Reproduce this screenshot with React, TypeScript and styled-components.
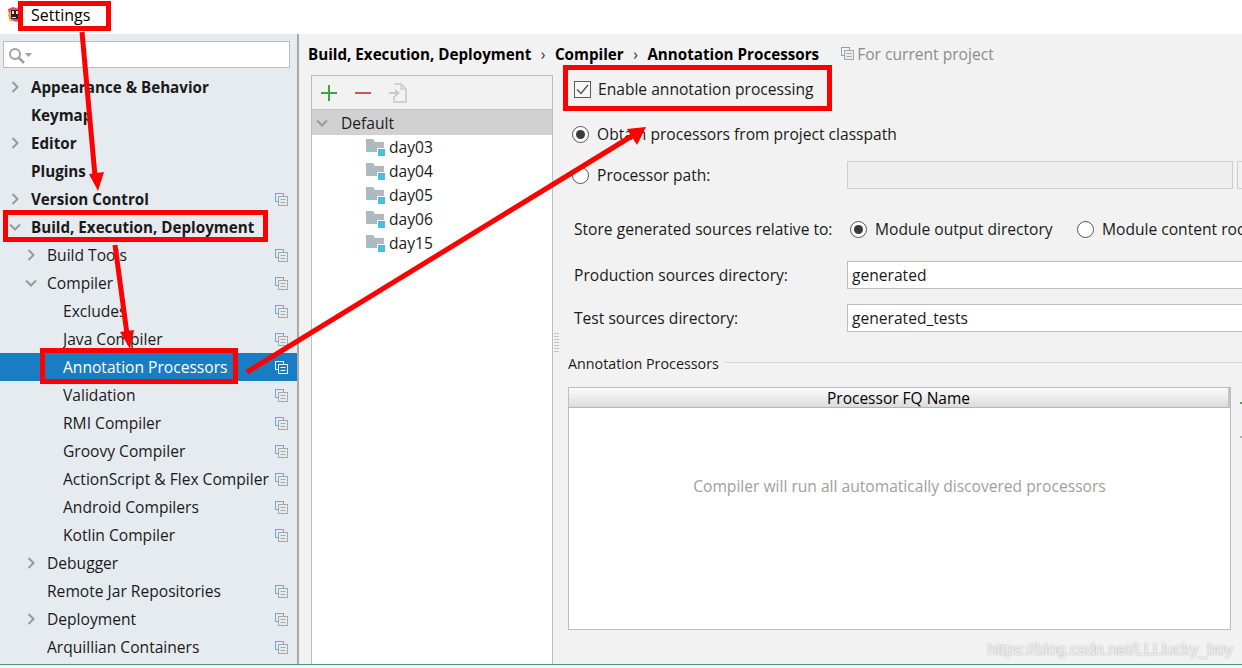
import React from "react"
import styled, { createGlobalStyle } from "styled-components"

const Global = createGlobalStyle`
    html, body {
        margin: 0;
        padding: 0;
        background: #ffffff;
        overflow: hidden;
    }
    * {
        box-sizing: border-box;
    }
`

type TreeItem = {
    label: string
    level: 0 | 1 | 2
    arrow?: "right" | "down"
    bold?: boolean
    copy?: boolean
    selected?: boolean
}

const treeItems: TreeItem[] = [
    { label: "Appearance & Behavior", level: 0, arrow: "right", bold: true },
    { label: "Keymap", level: 0, bold: true },
    { label: "Editor", level: 0, arrow: "right", bold: true },
    { label: "Plugins", level: 0, bold: true },
    { label: "Version Control", level: 0, arrow: "right", bold: true, copy: true },
    { label: "Build, Execution, Deployment", level: 0, arrow: "down", bold: true },
    { label: "Build Tools", level: 1, arrow: "right", copy: true },
    { label: "Compiler", level: 1, arrow: "down", copy: true },
    { label: "Excludes", level: 2, copy: true },
    { label: "Java Compiler", level: 2, copy: true },
    { label: "Annotation Processors", level: 2, copy: true, selected: true },
    { label: "Validation", level: 2, copy: true },
    { label: "RMI Compiler", level: 2, copy: true },
    { label: "Groovy Compiler", level: 2, copy: true },
    { label: "ActionScript & Flex Compiler", level: 2, copy: true },
    { label: "Android Compilers", level: 2, copy: true },
    { label: "Kotlin Compiler", level: 2, copy: true },
    { label: "Debugger", level: 1, arrow: "right" },
    { label: "Remote Jar Repositories", level: 1, copy: true },
    { label: "Deployment", level: 1, arrow: "right", copy: true },
    { label: "Arquillian Containers", level: 1, copy: true },
]

const modules = ["day03", "day04", "day05", "day06", "day15"]

const Chevron = ({ dir }: { dir: "right" | "down" }) => (
    <svg width="12" height="12" viewBox="0 0 12 12" fill="none">
        <path
            d={dir === "right" ? "M3.5 1 L8.5 6 L3.5 11" : "M1 3.5 L6 8.5 L11 3.5"}
            stroke="#9a9a9a"
            strokeWidth="2"
        />
    </svg>
)

const CopyIcon = ({ light }: { light?: boolean }) => (
    <svg width="13" height="13" viewBox="0 0 13 13" fill="none">
        <rect x="0.5" y="0.5" width="8" height="8" stroke={light ? "#ffffff" : "#6fa8d0"} />
        <rect x="3.5" y="3.5" width="9" height="9" fill={light ? "#1a7dc4" : "#e6ebf0"} stroke={light ? "#ffffff" : "#a8a8a8"} />
        <path d="M5.5 6.5 H10.5 M5.5 9.5 H10.5" stroke={light ? "#ffffff" : "#a8a8a8"} />
    </svg>
)

const FolderIcon = () => (
    <svg width="19" height="17" viewBox="0 0 19 17">
        <path d="M0 0 H7 L9 3 H18 V13 H0 Z" fill="#aeb9c0" />
        <rect x="11" y="9" width="8" height="8" fill="#ffffff" />
        <rect x="12" y="10" width="7" height="7" fill="#4fbbe8" />
    </svg>
)

const ProjectLogo = () => (
    <svg width="15" height="15" viewBox="0 0 15 15">
        <path d="M0 2 L5 0 L14 3 L15 10 L9 15 L2 13 Z" fill="#e8467c" />
        <path d="M9 0 L14 2 L15 8 L10 6 Z" fill="#f58a3c" />
        <path d="M0 8 L3 3 L5 13 L2 14 Z" fill="#f0a030" />
        <rect x="3" y="3" width="9" height="9" fill="#222222" />
        <rect x="4" y="4" width="2" height="3" fill="#dddddd" />
        <rect x="8" y="4" width="2" height="3" fill="#dddddd" />
        <rect x="4" y="10" width="4" height="1" fill="#dddddd" />
    </svg>
)

const ExportIcon = () => (
    <svg width="18" height="20" viewBox="0 0 18 20" fill="none">
        <path d="M5 1 H12 L17 6 V19 H5 V13" stroke="#d0d0d0" strokeWidth="2" />
        <path d="M12 1 V6 H17" stroke="#d0d0d0" strokeWidth="1.5" />
        <path d="M0 9 H6 V6 L11 10 L6 14 V11 H0 Z" fill="#c8c8c8" />
    </svg>
)

const Marks = () => (
    <S.Overlay width="1242" height="668" viewBox="0 0 1242 668" fill="none">
        <g stroke="#ff0000" strokeWidth="5">
            <rect x="20.5" y="3.5" width="88" height="25" />
            <rect x="5.5" y="212.5" width="260" height="27" />
            <rect x="42.5" y="350.5" width="193" height="31" />
            <rect x="565.5" y="67.5" width="264" height="41" />
        </g>
        <g stroke="#ff0000" strokeWidth="5">
            <path d="M82 32 L95 176" />
            <path d="M115 245 L127 334" />
            <path d="M247 372 L632 136" />
        </g>
        <g fill="#ff0000">
            <path d="M89 174 L104 172 L98 191 Z" />
            <path d="M120 332 L134 330 L130 349 Z" />
            <path d="M646 127 L627 129 L637 145 Z" />
        </g>
    </S.Overlay>
)

const App = () => {
    return (
        <S.Page>
            <Global />
            <S.TitleBar>
                <ProjectLogo />
                <S.Title>Settings</S.Title>
            </S.TitleBar>
            <S.Body>
                <S.Sidebar>
                    <S.SearchBox>
                        <svg width="23" height="16" viewBox="0 0 23 16" fill="none">
                            <circle cx="6" cy="6" r="5" stroke="#a0a0a0" strokeWidth="2" />
                            <path d="M9.5 9.5 L15 15" stroke="#a0a0a0" strokeWidth="2.5" />
                            <path d="M16 5 H23 L19.5 9 Z" fill="#a0a0a0" />
                        </svg>
                    </S.SearchBox>
                    <S.Tree>
                        {treeItems.map((item) => (
                            <S.TreeRow key={item.label} $selected={item.selected}>
                                <S.TreeIndent $level={item.level}>
                                    {item.arrow && <Chevron dir={item.arrow} />}
                                </S.TreeIndent>
                                <S.TreeLabel $bold={item.bold} $selected={item.selected}>
                                    {item.label}
                                </S.TreeLabel>
                                {item.copy && (
                                    <S.TreeCopy $selected={item.selected}>
                                        <CopyIcon light={item.selected} />
                                    </S.TreeCopy>
                                )}
                            </S.TreeRow>
                        ))}
                    </S.Tree>
                </S.Sidebar>
                <S.Main>
                    <S.Breadcrumb>
                        <b>Build, Execution, Deployment</b>
                        <S.Sep>›</S.Sep>
                        <b>Compiler</b>
                        <S.Sep>›</S.Sep>
                        <b>Annotation Processors</b>
                        <S.ForProject>
                            <CopyIcon />
                            For current project
                        </S.ForProject>
                    </S.Breadcrumb>
                    <S.Columns>
                        <S.ProfilePane>
                            <S.ProfileToolbar>
                                <svg width="16" height="16" viewBox="0 0 16 16">
                                    <path d="M8 0 V16 M0 8 H16" stroke="#3fa648" strokeWidth="2" />
                                </svg>
                                <svg width="16" height="16" viewBox="0 0 16 16">
                                    <path d="M0 8 H16" stroke="#c9584e" strokeWidth="2" />
                                </svg>
                                <ExportIcon />
                            </S.ProfileToolbar>
                            <S.DefaultRow>
                                <Chevron dir="down" />
                                <span>Default</span>
                            </S.DefaultRow>
                            {modules.map((m) => (
                                <S.ModuleRow key={m}>
                                    <FolderIcon />
                                    <span>{m}</span>
                                </S.ModuleRow>
                            ))}
                        </S.ProfilePane>
                        <S.Splitter>
                            <S.Grip />
                        </S.Splitter>
                        <S.Form>
                            <S.EnableRow>
                                <S.CheckBox>
                                    <svg width="13" height="11" viewBox="0 0 13 11" fill="none">
                                        <path d="M1 5.5 L5 9.5 L12 1" stroke="#555555" strokeWidth="1.4" />
                                    </svg>
                                </S.CheckBox>
                                Enable annotation processing
                            </S.EnableRow>
                            <S.ObtainRow>
                                <S.Radio $on />
                                Obtain processors from project classpath
                            </S.ObtainRow>
                            <S.PathRow>
                                <S.Radio />
                                <S.PathLabel>Processor path:</S.PathLabel>
                                <S.PathField />
                                <S.PathButton />
                            </S.PathRow>
                            <S.StoreRow>
                                <S.StoreLabel>Store generated sources relative to:</S.StoreLabel>
                                <S.Radio $on />
                                <S.StoreOption>Module output directory</S.StoreOption>
                                <S.Radio />
                                <span>Module content root</span>
                            </S.StoreRow>
                            <S.FieldRow>
                                <S.FieldLabel>Production sources directory:</S.FieldLabel>
                                <S.Field>generated</S.Field>
                            </S.FieldRow>
                            <S.FieldRow>
                                <S.FieldLabel>Test sources directory:</S.FieldLabel>
                                <S.Field>generated_tests</S.Field>
                            </S.FieldRow>
                            <S.GroupTitle>
                                <span>Annotation Processors</span>
                                <S.GroupLine />
                            </S.GroupTitle>
                            <S.TableWrap>
                                <S.Table>
                                    <S.TableHead>Processor FQ Name</S.TableHead>
                                    <S.TableEmpty>Compiler will run all automatically discovered processors</S.TableEmpty>
                                </S.Table>
                                <S.TableTools>
                                    <S.ToolMark $color="#3fa648" />
                                    <S.ToolMark $color="#b0b0b0" />
                                </S.TableTools>
                            </S.TableWrap>
                        </S.Form>
                    </S.Columns>
                </S.Main>
            </S.Body>
            <S.BottomLine />
            <Marks />
            <S.Watermark>https://blog.csdn.net/LLLlucky_boy</S.Watermark>
        </S.Page>
    )
}

const S = {
    Page: styled.div`
        position: relative;
        width: 1242px;
        height: 668px;
        overflow: hidden;
        display: flex;
        flex-direction: column;
        font-family: "Open Sans", "Noto Sans", sans-serif;
        font-size: 15.6px;
        color: #1a1a1a;
        background: #ffffff;
        b {
            font-size: 15.2px;
        }
    `,
    TitleBar: styled.div`
        height: 34px;
        flex: none;
        display: flex;
        align-items: center;
        padding: 0 0 5px 8px;
        background: #ffffff;
    `,
    Title: styled.span`
        margin-left: 8px;
        font-size: 16px;
        color: #000000;
    `,
    Body: styled.div`
        height: 630px;
        flex: none;
        display: flex;
        background: #f2f2f2;
        overflow: hidden;
    `,
    Sidebar: styled.div`
        width: 299px;
        flex: none;
        padding-top: 7px;
        background: #e6ebf0;
        border-right: 2px solid #a9a9a9;
    `,
    SearchBox: styled.div`
        width: 287px;
        height: 27px;
        margin-left: 3px;
        display: flex;
        align-items: center;
        padding: 2px 0 0 5px;
        background: #ffffff;
        border: 1px solid #bdbdbd;
    `,
    Tree: styled.div`
        margin-top: 5px;
    `,
    TreeRow: styled.div<{ $selected?: boolean }>`
        height: 28px;
        display: flex;
        align-items: center;
        background: ${(p) => (p.$selected ? "#1a7dc4" : "transparent")};
    `,
    TreeIndent: styled.div<{ $level: number }>`
        flex: none;
        width: ${(p) => [31, 47, 63][p.$level]}px;
        display: flex;
        align-items: center;
        padding-left: ${(p) => (p.$level === 0 ? 9 : 25)}px;
    `,
    TreeLabel: styled.div<{ $bold?: boolean; $selected?: boolean }>`
        flex: 1;
        min-width: 0;
        overflow: hidden;
        white-space: nowrap;
        font-weight: ${(p) => (p.$bold ? 700 : 400)};
        font-size: ${(p) => (p.$bold ? "15.2px" : "15.6px")};
        color: ${(p) => (p.$selected ? "#ffffff" : "#1a1a1a")};
    `,
    TreeCopy: styled.div<{ $selected?: boolean }>`
        flex: none;
        width: 22px;
        margin-left: 6px;
        display: flex;
        justify-content: flex-start;
    `,
    Main: styled.div`
        flex: 1;
        min-width: 0;
        display: flex;
        flex-direction: column;
    `,
    Breadcrumb: styled.div`
        height: 41px;
        flex: none;
        display: flex;
        align-items: center;
        padding: 0 0 2px 9px;
        white-space: nowrap;
        color: #000000;
    `,
    Sep: styled.span`
        margin: 0 9.5px;
        color: #333333;
    `,
    ForProject: styled.span`
        display: flex;
        align-items: center;
        gap: 3px;
        margin-left: 22px;
        color: #8c8c8c;
    `,
    Columns: styled.div`
        flex: 1;
        min-height: 0;
        display: flex;
        padding-left: 12px;
    `,
    ProfilePane: styled.div`
        width: 242px;
        flex: none;
        background: #ffffff;
        border: 1px solid #bdbdbd;
        border-bottom: none;
    `,
    ProfileToolbar: styled.div`
        height: 34px;
        display: flex;
        align-items: center;
        gap: 18px;
        padding-left: 9px;
        background: #f2f2f2;
        border-bottom: 1px solid #c4c4c4;
    `,
    DefaultRow: styled.div`
        height: 25px;
        display: flex;
        align-items: center;
        gap: 13px;
        padding-left: 4px;
        background: #d1d1d1;
    `,
    ModuleRow: styled.div`
        height: 24px;
        display: flex;
        align-items: center;
        gap: 4px;
        padding-left: 54px;
    `,
    Splitter: styled.div`
        width: 15px;
        flex: none;
        display: flex;
        align-items: center;
        padding: 0 0 54px 1px;
    `,
    Grip: styled.div`
        width: 5px;
        height: 20px;
        background: repeating-linear-gradient(#c4c4c4 0 1px, transparent 1px 3px);
    `,
    Form: styled.div`
        flex: 1;
        min-width: 0;
        display: flex;
        flex-direction: column;
        white-space: nowrap;
    `,
    EnableRow: styled.div`
        height: 28px;
        flex: none;
        display: flex;
        align-items: center;
        gap: 7px;
        margin-left: 6px;
    `,
    CheckBox: styled.div`
        width: 17px;
        height: 17px;
        display: flex;
        align-items: center;
        justify-content: center;
        background: #f7f7f7;
        border: 1px solid #5a5a5a;
    `,
    ObtainRow: styled.div`
        height: 28px;
        flex: none;
        margin: 17px 0 0 4px;
        display: flex;
        align-items: center;
        gap: 8px;
    `,
    PathRow: styled.div`
        height: 28px;
        flex: none;
        margin: 13px 0 0 4px;
        display: flex;
        align-items: center;
    `,
    PathLabel: styled.span`
        width: 250px;
        flex: none;
        margin-left: 8px;
    `,
    PathField: styled.div`
        width: 386px;
        height: 28px;
        flex: none;
        background: #eeeeee;
        border: 1px solid #cfcfcf;
    `,
    PathButton: styled.div`
        width: 20px;
        height: 28px;
        flex: none;
        margin-left: 4px;
        border: 1px solid #cfcfcf;
    `,
    StoreRow: styled.div`
        height: 28px;
        flex: none;
        margin: 26px 0 0 6px;
        display: flex;
        align-items: center;
        gap: 8px;
    `,
    StoreLabel: styled.span`
        width: 268px;
        flex: none;
    `,
    StoreOption: styled.span`
        width: 194px;
        flex: none;
    `,
    Radio: styled.span<{ $on?: boolean }>`
        width: 17px;
        height: 17px;
        flex: none;
        border-radius: 50%;
        background: #ffffff;
        border: 1px solid #555555;
        display: inline-flex;
        align-items: center;
        justify-content: center;
        &::after {
            content: "";
            width: 9px;
            height: 9px;
            border-radius: 50%;
            background: ${(p) => (p.$on ? "#3a3a3a" : "transparent")};
        }
    `,
    FieldRow: styled.div`
        height: 28px;
        flex: none;
        margin: 18px 0 0 6px;
        display: flex;
        align-items: center;
        & + & {
            margin-top: 15px;
        }
    `,
    FieldLabel: styled.span`
        width: 273px;
        flex: none;
    `,
    Field: styled.div`
        width: 500px;
        height: 28px;
        flex: none;
        padding-left: 4px;
        line-height: 26px;
        background: #ffffff;
        border: 1px solid #bdbdbd;
    `,
    GroupTitle: styled.div`
        height: 20px;
        flex: none;
        margin-top: 21px;
        display: flex;
        align-items: center;
        gap: 6px;
        font-size: 14.3px;
    `,
    GroupLine: styled.div`
        flex: 1;
        height: 1px;
        margin-bottom: 2px;
        background: #d4d4d4;
    `,
    TableWrap: styled.div`
        height: 243px;
        flex: none;
        margin-top: 14px;
        display: flex;
    `,
    Table: styled.div`
        width: 663px;
        flex: none;
        display: flex;
        flex-direction: column;
        background: #ffffff;
        border: 1px solid #bdbdbd;
    `,
    TableHead: styled.div`
        height: 20px;
        flex: none;
        text-align: center;
        line-height: 20px;
        font-size: 15.5px;
        color: #000000;
        background: linear-gradient(#fbfbfb, #dcdcdc);
        border-bottom: 1px solid #b5b5b5;
        border-right: 2px solid #c4c4c4;
    `,
    TableEmpty: styled.div`
        flex: 1;
        display: flex;
        justify-content: center;
        padding-top: 67px;
        color: #a0a0a0;
    `,
    TableTools: styled.div`
        flex: 1;
        display: flex;
        flex-direction: column;
        align-items: flex-end;
        gap: 32px;
        padding-top: 15px;
    `,
    ToolMark: styled.div<{ $color: string }>`
        width: 2px;
        height: 2px;
        background: ${(p) => p.$color};
    `,
    BottomLine: styled.div`
        height: 1px;
        flex: none;
        background: #3e9a7c;
    `,
    Overlay: styled.svg`
        position: absolute;
        left: 0;
        top: 0;
        pointer-events: none;
    `,
    Watermark: styled.div`
        position: absolute;
        right: 9px;
        bottom: 9px;
        font-family: "Liberation Sans", sans-serif;
        font-size: 16px;
        color: rgba(255, 255, 255, 0.75);
        text-shadow: 0 0 2px rgba(0, 0, 0, 0.35);
    `,
}

export default App
